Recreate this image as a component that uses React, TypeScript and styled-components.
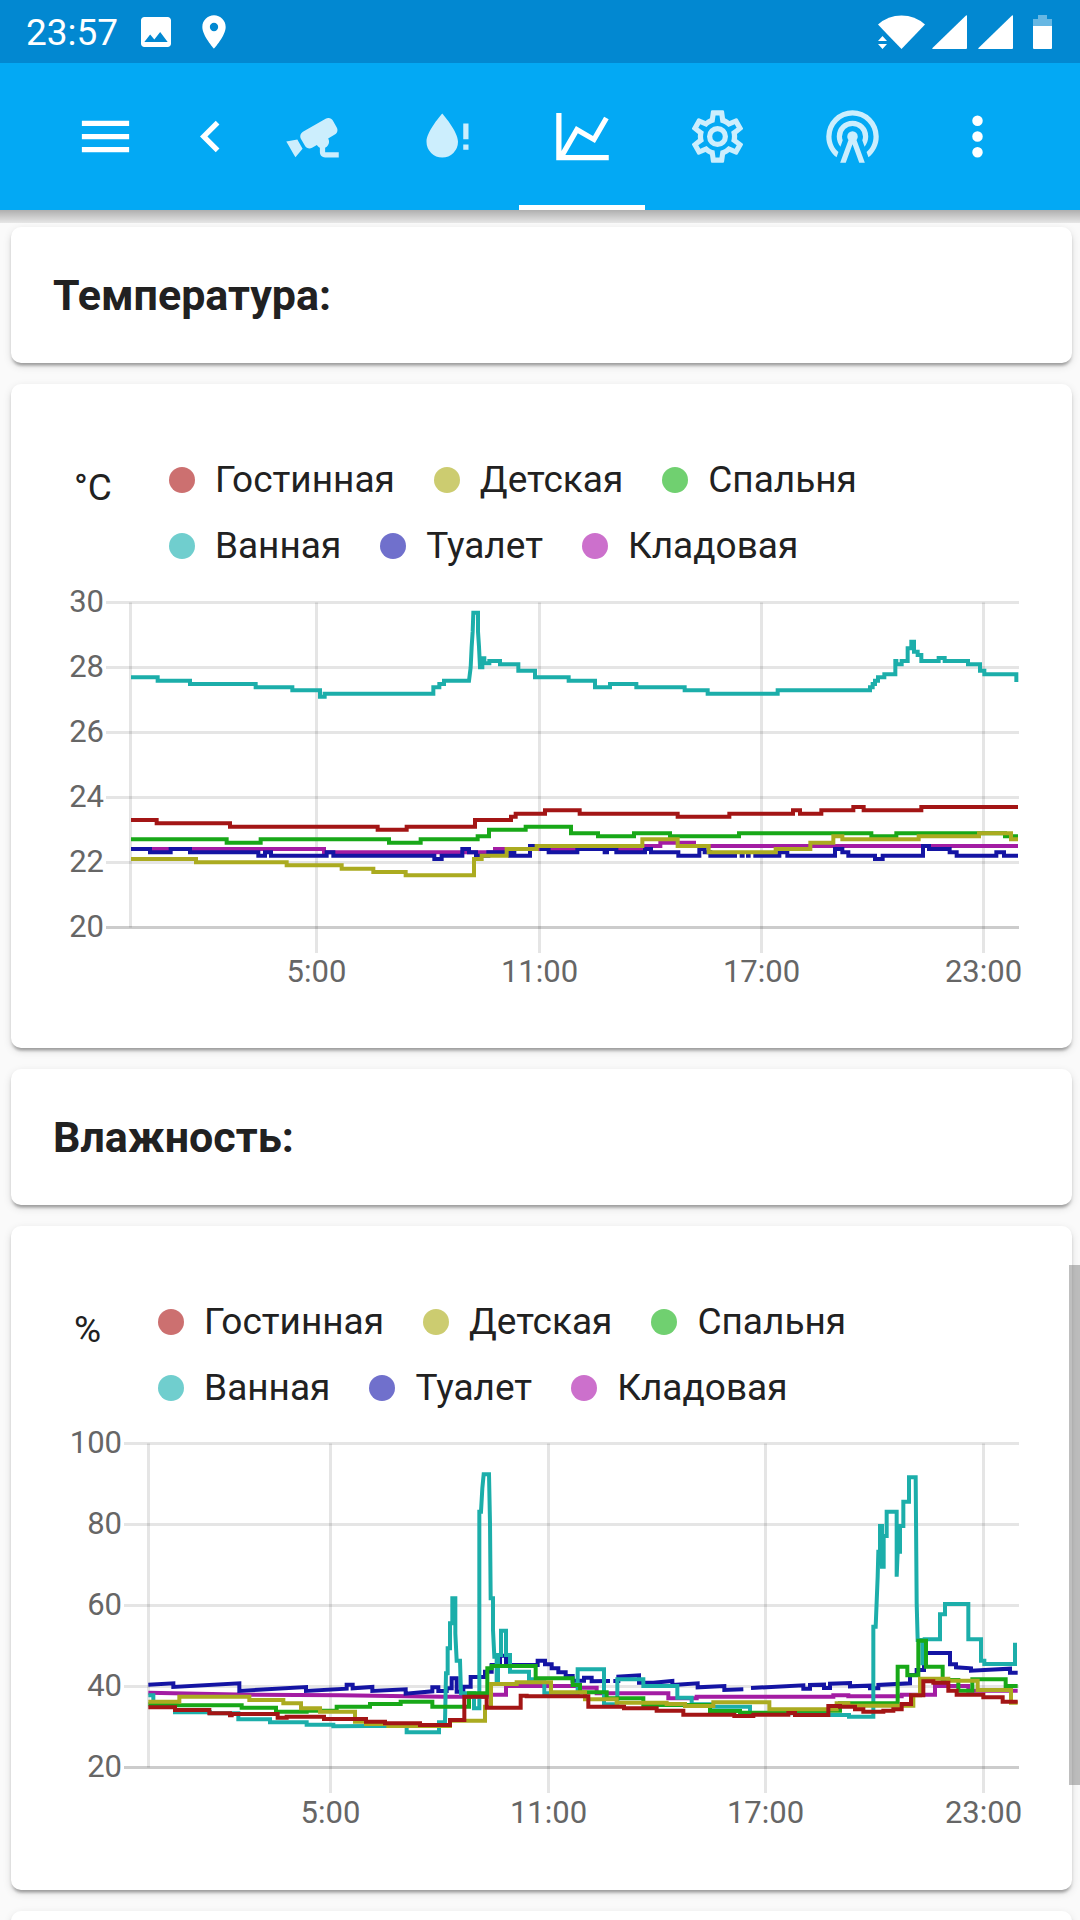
import React from "react";
import styled, { createGlobalStyle } from "styled-components";

const GlobalStyle = createGlobalStyle`
  *, *::before, *::after { box-sizing: border-box; }
  body {
    margin: 0;
    background: #fafafa;
    color: #212121;
    font-family: Roboto, "Liberation Sans", sans-serif;
  }
`;

const Screen = styled.div`
  display: flex;
  flex-direction: column;
  height: 100vh;
  overflow: hidden;
`;

const StatusBar = styled.div`
  display: flex;
  flex: none;
  align-items: center;
  justify-content: space-between;
  height: 63px;
  padding: 0 28px 0 26px;
  background: #0288d1;
  color: #fff;
`;

const StatusGroup = styled.div<{ $gap: number }>`
  display: flex;
  align-items: center;
  gap: ${(p) => p.$gap}px;
`;

const Clock = styled.time`
  padding-top: 3px;
  font-size: 37px;
  line-height: 60px;
`;

const BatteryIcon = styled.svg`
  margin-left: 9px;
`;

const Toolbar = styled.header`
  position: relative;
  z-index: 1;
  display: flex;
  flex: none;
  align-items: stretch;
  height: 147px;
  padding: 0 71px 0 53px;
  background: #03a9f4;
  color: #fff;

  &::after {
    content: "";
    position: absolute;
    top: 100%;
    left: 0;
    right: 0;
    height: 13px;
    background: linear-gradient(rgba(0, 0, 0, 0.3), rgba(0, 0, 0, 0.08));
  }
`;

const IconButton = styled.button<{ $width: number }>`
  display: flex;
  flex: none;
  align-items: center;
  justify-content: center;
  width: ${(p) => p.$width}px;
  padding: 0;
  border: 0;
  background: none;
  color: inherit;
`;

const BackSlot = styled.div`
  display: flex;
  padding: 0 7px 0 21px;
`;

const Tabs = styled.nav`
  display: flex;
  gap: 9px;
  margin-right: auto;
`;

const Tab = styled.button<{ $active: boolean }>`
  display: flex;
  align-items: center;
  justify-content: center;
  width: 126px;
  padding: 5px 0 0;
  border: 0;
  border-bottom: 5px solid ${(p) => (p.$active ? "#fff" : "transparent")};
  background: none;
  color: ${(p) => (p.$active ? "#fff" : "rgba(255, 255, 255, 0.8)")};
`;

const Content = styled.main`
  display: flex;
  flex: 1;
  flex-direction: column;
  gap: 21px;
  min-height: 0;
  padding: 17px 8px 0 11px;
  overflow: hidden;
`;

const Card = styled.section`
  flex: none;
  padding: 42px;
  border-radius: 10px;
  background: #fff;
  box-shadow:
    0 5px 3px -3px rgba(0, 0, 0, 0.2),
    0 3px 3px 0 rgba(0, 0, 0, 0.14),
    0 3px 8px 0 rgba(0, 0, 0, 0.12);
`;

const ChartCard = styled(Card)`
  padding-top: 63px;
`;

const Title = styled.h2`
  margin: 0;
  font-size: 43px;
  font-weight: 700;
  line-height: 52px;
`;

const ChartHead = styled.div`
  display: flex;
  padding-left: 21px;
  font-size: 37px;
  line-height: 66px;
`;

const Unit = styled.span`
  flex: none;
  padding: 8px 57px 0 0;
`;

const Legend = styled.ul`
  display: flex;
  flex-wrap: wrap;
  column-gap: 39px;
  margin: 0;
  padding: 0;
  list-style: none;
`;

const LegendItem = styled.li`
  display: flex;
  align-items: center;
  gap: 20px;
`;

const Dot = styled.span<{ $color: string }>`
  width: 26px;
  height: 26px;
  border-radius: 50%;
  background: ${(p) => p.$color};
`;

const Plot = styled.svg`
  display: block;
  width: 100%;
  height: auto;
  font-size: 31px;
  fill: #666;
`;

const ScrollThumb = styled.div`
  position: fixed;
  z-index: 2;
  top: 1265px;
  right: 0;
  width: 11px;
  height: 520px;
  background: rgba(128, 128, 128, 0.5);
`;

const icons = {
  menu: "M3,6H21V8H3V6M3,11H21V13H3V11M3,16H21V18H3V16Z",
  back: "M15.41,16.58L10.83,12L15.41,7.41L14,6L8,12L14,18L15.41,16.58Z",
  cctv: "M18.15,4.94C17.77,4.91 17.37,5 17,5.2L8.35,10.2C7.39,10.76 7.07,12 7.62,12.94L9.12,15.53C9.67,16.5 10.89,16.82 11.85,16.27L13.65,15.23C13.92,15.69 14.32,16.06 14.81,16.27V18.04C14.81,19.13 15.7,20 16.81,20H22V18.04H16.81V16.27C17.72,15.87 18.31,14.97 18.31,14C18.31,13.54 18.19,13.11 17.97,12.73L20.5,11.27C21.47,10.71 21.8,9.5 21.24,8.53L19.74,5.94C19.4,5.34 18.79,5 18.15,4.94M6.22,13.17L2,13.87L2.75,15.17L4.75,18.63L5.5,19.93L8.22,16.63L6.22,13.17Z",
  water:
    "M10,20A6,6 0 0,1 4,14C4,10 10,3.25 10,3.25C10,3.25 16,10 16,14A6,6 0 0,1 10,20M18,7H20V13H18V7M18,15H20V17H18V15Z",
  chart:
    "M16,11.78L20.24,4.45L21.97,5.45L16.74,14.5L10.23,10.75L5.46,19H22V21H2V3H4V17.54L9.5,8L16,11.78Z",
  cog: "M12,8A4,4 0 0,1 16,12A4,4 0 0,1 12,16A4,4 0 0,1 8,12A4,4 0 0,1 12,8M12,10A2,2 0 0,0 10,12A2,2 0 0,0 12,14A2,2 0 0,0 14,12A2,2 0 0,0 12,10M10,22C9.75,22 9.54,21.82 9.5,21.58L9.13,18.93C8.5,18.68 7.96,18.34 7.44,17.94L4.95,18.95C4.73,19.03 4.46,18.95 4.34,18.73L2.34,15.27C2.21,15.05 2.27,14.78 2.46,14.63L4.57,12.97L4.5,12L4.57,11L2.46,9.37C2.27,9.22 2.21,8.95 2.34,8.73L4.34,5.27C4.46,5.05 4.73,4.96 4.95,5.05L7.44,6.05C7.96,5.66 8.5,5.32 9.13,5.07L9.5,2.42C9.54,2.18 9.75,2 10,2H14C14.25,2 14.46,2.18 14.5,2.42L14.87,5.07C15.5,5.32 16.04,5.66 16.56,6.05L19.05,5.05C19.27,4.96 19.54,5.05 19.66,5.27L21.66,8.73C21.79,8.95 21.73,9.22 21.54,9.37L19.43,11L19.5,12L19.43,13L21.54,14.63C21.73,14.78 21.79,15.05 21.66,15.27L19.66,18.73C19.54,18.95 19.27,19.04 19.05,18.95L16.56,17.95C16.04,18.34 15.5,18.68 14.87,18.93L14.5,21.58C14.46,21.82 14.25,22 14,22H10M11.25,4L10.88,6.61C9.68,6.86 8.62,7.5 7.85,8.39L5.44,7.35L4.69,8.65L6.8,10.2C6.4,11.37 6.4,12.64 6.8,13.8L4.68,15.36L5.43,16.66L7.86,15.62C8.63,16.5 9.68,17.14 10.87,17.38L11.24,20H12.76L13.13,17.39C14.32,17.14 15.37,16.5 16.14,15.62L18.57,16.66L19.32,15.36L17.2,13.81C17.6,12.64 17.6,11.37 17.2,10.2L19.31,8.65L18.56,7.35L16.15,8.39C15.38,7.5 14.32,6.86 13.12,6.62L12.75,4H11.25Z",
  tower:
    "M12,10A2,2 0 0,1 14,12C14,12.5 13.82,12.94 13.53,13.29L16.7,22H14.57L12,14.93L9.43,22H7.3L10.47,13.29C10.18,12.94 10,12.5 10,12A2,2 0 0,1 12,10M12,8A4,4 0 0,0 8,12C8,12.5 8.1,13 8.28,13.46L7.4,15.86C6.53,14.81 6,13.47 6,12A6,6 0 0,1 12,6A6,6 0 0,1 18,12C18,13.47 17.47,14.81 16.6,15.86L15.72,13.46C15.9,13 16,12.5 16,12A4,4 0 0,0 12,8M12,4A8,8 0 0,0 4,12C4,14.36 5,16.5 6.64,17.94L5.92,19.94C3.54,18.11 2,15.23 2,12A10,10 0 0,1 12,2A10,10 0 0,1 22,12C22,15.23 20.46,18.11 18.08,19.94L17.36,17.94C19,16.5 20,14.36 20,12A8,8 0 0,0 12,4Z",
  more: "M12,16A2,2 0 0,1 14,18A2,2 0 0,1 12,20A2,2 0 0,1 10,18A2,2 0 0,1 12,16M12,10A2,2 0 0,1 14,12A2,2 0 0,1 12,14A2,2 0 0,1 10,12A2,2 0 0,1 12,10M12,4A2,2 0 0,1 14,6A2,2 0 0,1 12,8A2,2 0 0,1 10,6A2,2 0 0,1 12,4Z",
  image:
    "M21 19V5c0-1.1-.9-2-2-2H5c-1.1 0-2 .9-2 2v14c0 1.1.9 2 2 2h14c1.1 0 2-.9 2-2zM8.5 13.5l2.5 3.01L14.5 12l4.5 6H5l3.5-4.5z",
  place:
    "M12 2C8.13 2 5 5.13 5 9c0 5.25 7 13 7 13s7-7.75 7-13c0-3.87-3.13-7-7-7zm0 9.5a2.5 2.5 0 0 1 0-5 2.5 2.5 0 0 1 0 5z",
};

function Icon({ path, size = 63 }: { path: string; size?: number }) {
  return (
    <svg width={size} height={size} viewBox="0 0 24 24" fill="currentColor" aria-hidden="true">
      <path d={path} />
    </svg>
  );
}

function Signal() {
  return (
    <svg width="39" height="34" viewBox="0 0 39 34" fill="currentColor" aria-hidden="true">
      <path d="M35 1V33Q35 34 34 34H0.5Q0 34 0.5 33L34 0.5Q35 0 35 1Z" />
    </svg>
  );
}

const tabs = [
  { id: "cctv", label: "Камеры", path: icons.cctv },
  { id: "water", label: "Протечки", path: icons.water },
  { id: "chart", label: "Графики", path: icons.chart },
  { id: "cog", label: "Настройки", path: icons.cog },
  { id: "tower", label: "Сеть", path: icons.tower },
];

const rooms = [
  { name: "Гостинная", line: "#a31515", dot: "#cc7070" },
  { name: "Детская", line: "#abab20", dot: "#cccc70" },
  { name: "Спальня", line: "#18a818", dot: "#70d070" },
  { name: "Ванная", line: "#1caeaa", dot: "#70cece" },
  { name: "Туалет", line: "#1414a3", dot: "#7070cc" },
  { name: "Кладовая", line: "#a31ca3", dot: "#cc70cc" },
];

interface Axis {
  left: number;
  tickLeft: number;
  bottom: number;
  labelY: number;
  originY: number;
  yTicks: { label: string; y: number }[];
  xTicks: { label: string; x: number }[];
}

const PLOT_RIGHT = 966;

const temperatureAxis: Axis = {
  left: 77,
  tickLeft: 51,
  bottom: 374,
  labelY: 403,
  originY: 1,
  yTicks: ["30", "28", "26", "24", "22", "20"].map((label, i) => ({ label, y: 23.5 + 65 * i })),
  xTicks: [
    { label: "5:00", x: 263.5 },
    { label: "11:00", x: 486.5 },
    { label: "17:00", x: 708.5 },
    { label: "23:00", x: 930.5 },
  ],
};

const humidityAxis: Axis = {
  left: 95,
  tickLeft: 69,
  bottom: 372,
  labelY: 402,
  originY: -1,
  yTicks: ["100", "80", "60", "40", "20"].map((label, i) => ({ label, y: 22.5 + 81 * i })),
  xTicks: [
    { label: "5:00", x: 277.5 },
    { label: "11:00", x: 495.5 },
    { label: "17:00", x: 712.5 },
    { label: "23:00", x: 930.5 },
  ],
};

// Histories in room order, three units to a plot pixel.
const temperatureHistory = [
  "M243 720H320V730H540V740H983V749H1070V740H1275V720H1383V710H1397V701H1485V691H1589V701H1883V710H2038V701H2229V691H2250V701H2314V691H2410V681H2441V691H2614V681H2904",
  "M243 837H438V847H710V856H875V866H970V876H1067V886H1272V837H1295V827H1370V807H1460V798H1777V778H1883V798H1976V817H2177V807H2281V788H2350V769H2377V778H2606V769H2787V760H2883V778H2904",
  "M243 778H530V788H632V778H1017V788H1112V778H1283V769H1317V749H1427V740H1563V760H1644V769H1752V760H1860V769H2067V760H2464V769H2539V760H2865V769H2904",
  "M243 292H323V302H420V312H617V322H727V331H810V350H824V341H1150V322H1168V312H1182V302H1257L1262 262L1265 200L1268 155L1270 98H1284V155L1287 200L1290 262H1297V235H1303V250H1318V243H1350V253H1405V272H1455V292H1556V302H1635V322H1680V312H1759V322H1904V331H1973V341H2183V331H2460V322H2468V312H2475V302H2484V292H2503V283H2536V243H2539V253H2555V243H2573V205H2584V185H2592V215H2603V225H2614V243H2666V234H2684V243H2754V253H2790V272H2803V283H2899V306",
  "M243 807H300V817H362V807H420V817H625V827H645V817H663V827H830V817H850V827H1153V837H1175V827H1237V807H1257V817H1278V827H1315V817H1380V827H1385V817H1393V827H1440V798H1475V807H1496V817H1582V807H1664V817H1671V807H1699V817H1785V807H1803V817H1885V827H1948V807H1964V817H1981V827H2061M2069 827H2084M2088 827H2102M2110 827H2188V817H2212V827H2355V807H2377V817H2395V827H2475V837H2498V827H2619V798H2637V807H2699V817H2720V827H2839V817H2862V827H2904",
  "M243 807H822V817H1335V807H1785V798H1831V788H1932V798H2904",
];

const humidityHistory = [
  "M295 862H375V870H478V880H540V886H545V882H683V893H710V890H822V897H948V905H1005V910H1110V915H1200V900H1243V830H1310V863H1412V827H1430V829H1615V860H1722V865H1820V872H1900V884H2053V888H2110V884H2215V879H2235V885H2335V858H2370V860H2415V868H2440V875H2500V872H2530V868H2555V852H2583V826H2620V784H2650V788H2695V812H2720V824H2800V832H2858V845H2903",
  "M295 845H388V830H598V840H700V850H753V865H810V875H915V905H948V912H1015V918H1200V902H1305V860H1323V792H1400V787H1503V817H1605V838H1700V848H1850V852H1905V858H1990V847H2158V868H2360V850H2395V857H2590V826H2610V776H2695V782H2783V810H2883V848H2903",
  "M295 853H380V856H575V863H678V875H770V872H860V860H960V852H1052V845H1147V860H1257V820H1312V745H1325V738H1457V775H1568V795H1590V817H1670V835H1780V855H1980V873H2070V878H2200V872H2370V850H2543V740H2572V766H2605V662H2628V740H2678V780H2725V812H2767V778H2867V798H2903",
  "M295 826H310V855H375V877H480V880H565V898H660V907H770V914H850V919L1070 917V937H1167V907H1185L1188 760L1193 760V685H1200V610H1207V535H1216V640L1220 722H1230L1233 820H1272V865H1288V275H1293L1297 205L1301 163H1317L1320 310L1322 535H1329V630L1333 710H1340V785H1344V705H1353V632H1368V705H1380V755H1437V778H1483V820H1583V748H1662V853H1702V778H1780V798H1882V833H1925V853H1980V860H2100V880H2330V885H2397V890H2470V620H2477L2480 545L2483 470L2485 395H2490V318H2496V440H2501V348H2510V275H2540V470L2543 395H2550V318H2560V245H2577V172H2597L2600 548L2603 660H2617V730H2624V658H2670V583H2685V552H2755V658H2793V722H2803V732H2895V668",
  "M295 794L370 790V801L568 790V813L768 801V813L890 806V794H908V805L967 801V813L1067 808V821L1147 814V802H1165V813H1190V805H1205V775H1220V815H1240V800H1262V771H1305V755H1325V735H1350V707H1368V735H1463V722H1485V733H1505V745H1525V757H1547V768H1568V782H1602V773H1625V784L1680 783M1690 783H1705V770L1767 766V788H1810L1867 783V795L1943 790V802L2023 798V810L2080 808M2103 804L2260 796V806H2280V795L2322 794V804H2340V791L2400 789V799L2460 797V805H2485V795L2580 790V765H2600V750H2622V699H2700V733H2718V742L2763 745V752L2880 746V758H2903",
  "M295 818L600 824L870 826L1180 830H1310V824H1368V798H1585V803H1640V820H1855V835H1940V830H2350V826H2395V829H2555V824H2655V798H2755V812H2903",
];

function HistoryChart({ title, axis, history }: { title: string; axis: Axis; history: string[] }) {
  const last = axis.yTicks.length - 1;
  return (
    <Plot viewBox="0 0 977 427" role="img" aria-label={title}>
      <g strokeWidth="3" stroke="#000">
        {axis.yTicks.map((t, i) => (
          <line
            key={t.label}
            x1={axis.tickLeft + 2}
            x2={PLOT_RIGHT}
            y1={t.y}
            y2={t.y}
            strokeOpacity={i === last ? 0.2 : 0.1}
          />
        ))}
        <line
          x1={axis.left + 0.5}
          x2={axis.left + 0.5}
          y1={axis.yTicks[0].y}
          y2={axis.yTicks[last].y}
          strokeOpacity="0.1"
        />
        {axis.xTicks.map((t) => (
          <line
            key={t.label}
            x1={t.x}
            x2={t.x}
            y1={axis.yTicks[0].y}
            y2={axis.bottom}
            strokeOpacity="0.1"
          />
        ))}
      </g>
      {axis.yTicks.map((t) => (
        <text key={t.label} x={axis.tickLeft} y={t.y + 9} textAnchor="end">
          {t.label}
        </text>
      ))}
      {axis.xTicks.map((t) => (
        <text key={t.label} x={t.x} y={axis.labelY} textAnchor="middle">
          {t.label}
        </text>
      ))}
      <g
        transform={`translate(-3 ${axis.originY}) scale(${1 / 3})`}
        fill="none"
        strokeWidth="12"
      >
        {history
          .map((d, i) => <path key={rooms[i].name} d={d} stroke={rooms[i].line} />)
          .reverse()}
      </g>
    </Plot>
  );
}

function ChartPanel(props: { title: string; unit: string; axis: Axis; history: string[] }) {
  return (
    <ChartCard aria-label={props.title}>
      <ChartHead>
        <Unit>{props.unit}</Unit>
        <Legend>
          {rooms.map((room) => (
            <LegendItem key={room.name}>
              <Dot $color={room.dot} />
              {room.name}
            </LegendItem>
          ))}
        </Legend>
      </ChartHead>
      <HistoryChart title={props.title} axis={props.axis} history={props.history} />
    </ChartCard>
  );
}

export default function App() {
  return (
    <Screen>
      <GlobalStyle />
      <StatusBar>
        <StatusGroup $gap={18}>
          <Clock>23:57</Clock>
          <Icon path={icons.image} size={40} />
          <Icon path={icons.place} size={40} />
        </StatusGroup>
        <StatusGroup $gap={7}>
          <svg width="48" height="34" viewBox="0 0 48 34" fill="currentColor" aria-hidden="true">
            <path d="M1 9.5Q11 0.5 24.5 0.5Q38 0.5 48 9.5L24.5 34L10 19Z" />
            <path d="M1 26L5.500 21L10 26ZM1 29H10L5.500 34Z" />
          </svg>
          <Signal />
          <Signal />
          <BatteryIcon width="19" height="34" viewBox="0 0 19 34" fill="currentColor" aria-hidden="true">
            <path d="M5 0H14V4H19V11H0V4H5Z" opacity="0.4" />
            <path d="M0 11H19V33Q19 34 18 34H1Q0 34 0 33Z" />
          </BatteryIcon>
        </StatusGroup>
      </StatusBar>
      <Toolbar>
        <IconButton $width={105} aria-label="Меню">
          <Icon path={icons.menu} />
        </IconButton>
        <BackSlot>
          <IconButton $width={63} aria-label="Назад">
            <Icon path={icons.back} />
          </IconButton>
        </BackSlot>
        <Tabs>
          {tabs.map((t) => (
            <Tab key={t.id} $active={t.id === "chart"} aria-label={t.label}>
              <Icon path={t.path} />
            </Tab>
          ))}
        </Tabs>
        <IconButton $width={63} aria-label="Ещё">
          <Icon path={icons.more} />
        </IconButton>
      </Toolbar>
      <Content>
        <Card>
          <Title>Температура:</Title>
        </Card>
        <ChartPanel
          title="Температура"
          unit="°C"
          axis={temperatureAxis}
          history={temperatureHistory}
        />
        <Card>
          <Title>Влажность:</Title>
        </Card>
        <ChartPanel title="Влажность" unit="%" axis={humidityAxis} history={humidityHistory} />
        <Card />
      </Content>
      <ScrollThumb />
    </Screen>
  );
}
